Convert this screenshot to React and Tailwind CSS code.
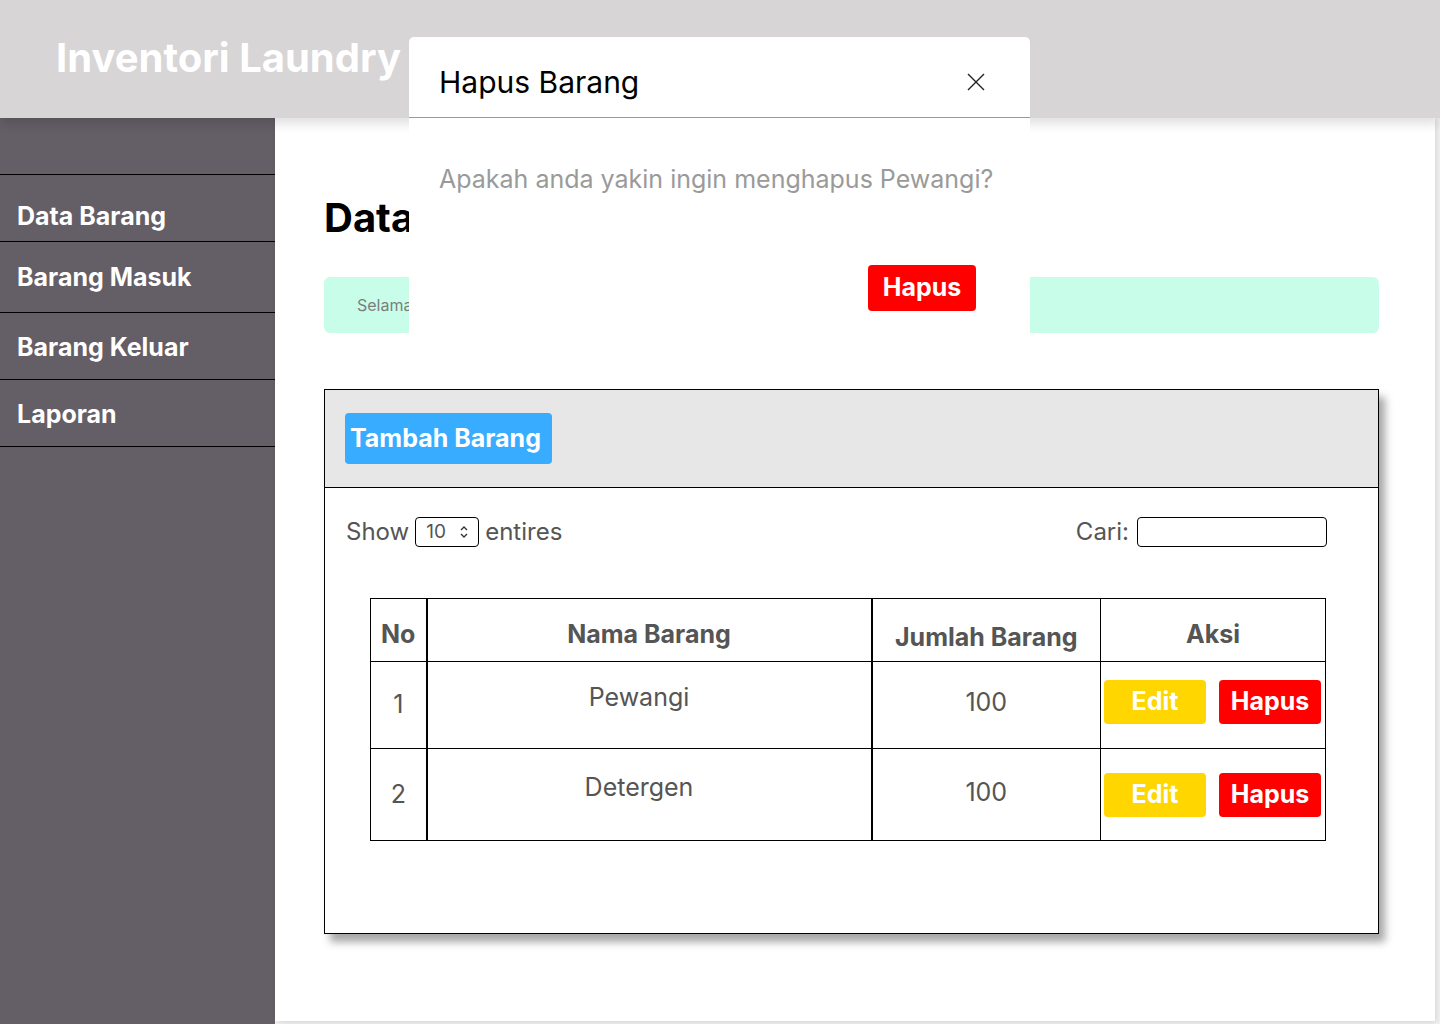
import React from 'react';

const menu = [
  { label: 'Data Barang', cls: 'h-[67px] pt-[18px]' },
  { label: 'Barang Masuk', cls: 'h-[71px] pt-[2px]' },
  { label: 'Barang Keluar', cls: 'h-[67px] pt-[4px]' },
  { label: 'Laporan', cls: 'h-[67px] pt-[4px]' },
];

const rows = [
  { no: 1, nama: 'Pewangi', jumlah: 100, h: 'h-[87px]', btn: 'pb-[6px]' },
  { no: 2, nama: 'Detergen', jumlah: 100, h: 'h-[92px]', btn: 'pb-[0px]' },
];

const App = () => {
  return (
    <div className="relative w-[1440px] h-[1024px] overflow-hidden bg-[#f4f4f4] font-['Inter','Noto_Sans',sans-serif]">
      {/* top bar */}
      <header className="relative z-10 h-[118px] bg-[#d7d5d6] shadow-[0_6px_10px_rgba(0,0,0,0.12)]">
        <h1 className="pl-[56px] pt-[34px] text-[40px] font-bold leading-[48px] text-white">Inventori Laundry</h1>
      </header>

      <div className="flex h-[906px]">
        <aside className="w-[275px] shrink-0 bg-[#645e66]">
          <div className="h-[57px] border-b border-black" />
          {menu.map((m) => (
            <div key={m.label} className={`${m.cls} flex items-center border-b border-black pl-[17px] text-[25px] font-bold text-white`}>
              {m.label}
            </div>
          ))}
        </aside>

        <main className="flex-1 mr-[5px] mb-[3px] bg-white shadow-[2px_2px_6px_rgba(0,0,0,0.12)] pl-[49px] pr-[56px]">
          <h2 className="pt-[76px] text-[40px] font-bold leading-[48px] text-black">Data Barang</h2>
          <div className="mt-[35px] flex h-[56px] items-center rounded-[6px] bg-[#c8fee9] pl-[33px] text-[16px] text-[#7d7d7d]">
            Selamat datang di halaman data barang
          </div>

          <section className="mt-[56px] h-[545px] border border-black bg-white shadow-[6px_8px_8px_rgba(0,0,0,0.35)]">
            <div className="flex h-[98px] items-center border-b border-black bg-[#e7e7e7] pl-[20px]">
              <button className="h-[51px] w-[207px] rounded-[4px] bg-[#38acff] pl-[5px] text-left text-[25px] font-bold text-white">Tambah Barang</button>
            </div>

            <div className="flex items-center justify-between pl-[21px] pr-[51px] pt-[26px] text-[24px] text-[#555555]">
              <div className="flex items-center gap-[6px]">
                <span>Show</span>
                <div className="flex h-[30px] w-[64px] items-center justify-between rounded-[4px] border border-black pl-[10px] pr-[9px] text-[19px]">
                  <span>10</span>
                  <svg width="10" height="14" viewBox="0 0 10 14" fill="none" stroke="#333" strokeWidth="1.4">
                    <path d="M2 5l3-3 3 3M2 9l3 3 3-3" />
                  </svg>
                </div>
                <span>entires</span>
              </div>
              <div className="flex items-center gap-[8px]">
                <span>Cari:</span>
                <div className="h-[30px] w-[190px] rounded-[4px] border border-black" />
              </div>
            </div>

            <table className="ml-[45px] mt-[48px] w-[956px] border-collapse text-[25px] text-[#555555]">
              <thead>
                <tr className="h-[63px]">
                  <th className="w-[56px] border border-black border-r-2 pt-[10px] font-bold">No</th>
                  <th className="w-[445px] border border-black border-r-2 pt-[10px] font-bold">Nama Barang</th>
                  <th className="w-[229px] border border-black pt-[16px] font-bold">Jumlah Barang</th>
                  <th className="border border-black pt-[10px] font-bold">Aksi</th>
                </tr>
              </thead>
              <tbody>
                {rows.map((r) => (
                  <tr key={r.no} className={r.h}>
                    <td className="border border-black border-r-2 text-center">{r.no}</td>
                    <td className="border border-black border-r-2 pb-[14px] pr-[20px] text-center">{r.nama}</td>
                    <td className="border border-black border-l-2 pb-[4px] text-center">{r.jumlah}</td>
                    <td className={`border border-black px-[3px] ${r.btn}`}>
                      <div className="flex items-center gap-[13px]">
                        <button className="h-[44px] w-[102px] rounded-[4px] bg-[#ffd600] text-[25px] font-bold text-white">Edit</button>
                        <button className="h-[44px] w-[102px] rounded-[4px] bg-[#ff0000] text-[25px] font-bold text-white">Hapus</button>
                      </div>
                    </td>
                  </tr>
                ))}
              </tbody>
            </table>
          </section>
        </main>
      </div>

      {/* delete confirmation modal */}
      <div className="absolute left-[409px] top-[37px] z-20 h-[296px] w-[621px] rounded-t-[5px] bg-white">
        <div className="flex h-[81px] items-center justify-between border-b border-[#9a9a9a] pl-[30px] pr-[44px]">
          <h3 className="pt-[10px] text-[30px] leading-[40px] text-black">Hapus Barang</h3>
          <svg width="20" height="20" viewBox="0 0 20 20" stroke="#222" strokeWidth="1.4" className="mt-[10px]">
            <path d="M2 2l16 16M18 2L2 18" />
          </svg>
        </div>
        <p className="pl-[30px] pt-[45px] text-[25px] leading-[32px] text-[#9a9a9a]">Apakah anda yakin ingin menghapus Pewangi?</p>
        <div className="flex justify-end pr-[54px] pt-[70px]">
          <button className="h-[46px] w-[108px] rounded-[4px] bg-[#ff0000] text-[25px] font-bold text-white">Hapus</button>
        </div>
      </div>
    </div>
  );
};

export default App;
